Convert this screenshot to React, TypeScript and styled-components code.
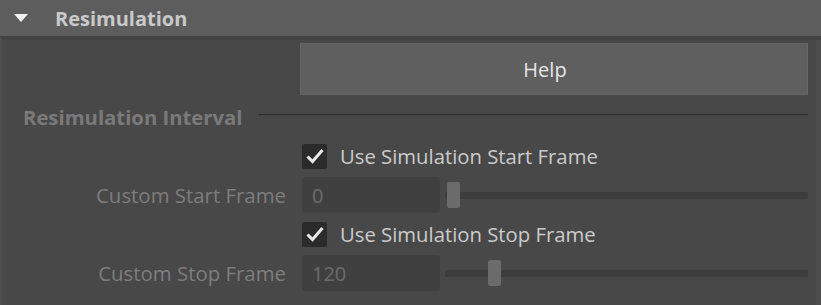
import React from 'react';
import styled, {createGlobalStyle} from 'styled-components';

const GlobalStyle = createGlobalStyle`
  html, body {
    margin: 0;
    padding: 0;
    background-color: #484848;
  }
  * {
    box-sizing: border-box;
  }
`;

const Page = styled.div`
  width: 821px;
  height: 305px;
  overflow: hidden;
  background-color: #484848;
  font-family: "Open Sans", "Noto Sans", sans-serif;
  display: flex;
  flex-direction: column;
`;

const Header = styled.div`
  height: 36px;
  flex-shrink: 0;
  display: flex;
  align-items: center;
  background-color: #5d5d5d;
  padding-left: 14px;
  color: #c9c9c9;
  font-size: 20px;
  font-weight: 700;

  > svg {
    margin-right: 27px;
  }
`;

const Body = styled.div`
  flex: 1;
  display: flex;
  border-left: 2px solid #4f4f4f;
  border-top: 4px solid #444;
`;

const Content = styled.div`
  flex: 1;
  padding: 3px 8px 0 0;
  display: flex;
  flex-direction: column;
`;

const ScrollStrip = styled.div`
  width: 5px;
  background-color: #4d4d4d;
`;

const Row = styled.div<{ $height: number }>`
  display: grid;
  grid-template-columns: 284px 1fr;
  column-gap: 14px;
  align-items: center;
  height: ${p => p.$height}px;
`;

const FieldLabel = styled.div`
  text-align: right;
  color: #7d7d7d;
  font-size: 20.4px;
  white-space: nowrap;
`;

const Button = styled.button`
  height: 52px;
  background-color: #5f5f5f;
  border: 1px solid #666;
  color: #e6e6e6;
  font-family: inherit;
  font-size: 20px;
  padding: 0 18px 0 0;
  cursor: pointer;
`;

const SectionTitle = styled.div`
  display: flex;
  align-items: center;
  gap: 16px;
  height: 42px;
  padding-left: 21px;
  padding-top: 2px;
  color: #7a7a7a;
  font-size: 20.3px;
  font-weight: 700;
  white-space: nowrap;
`;

const Rule = styled.div`
  flex: 1;
  height: 2px;
  margin-bottom: 4px;
  border-top: 1px solid #2c2c2c;
  border-bottom: 1px solid #444;
`;

const CheckLabel = styled.label`
  display: flex;
  align-items: center;
  gap: 13px;
  color: #cbcbcb;
  font-size: 20.3px;
  white-space: nowrap;
  margin-left: 2px;
`;

const CheckBox = styled.span`
  width: 25px;
  height: 25px;
  border-radius: 2px;
  background-color: #2b2b2b;
  display: flex;
  align-items: center;
  justify-content: center;
`;

const Controls = styled.div`
  display: flex;
  align-items: center;
  gap: 5px;
  margin-left: 2px;
`;

const NumberInput = styled.div`
  width: 138px;
  height: 36px;
  border-radius: 3px;
  background-color: #404040;
  color: #6c6c6c;
  font-size: 20px;
  display: flex;
  align-items: center;
  padding-left: 10px;
`;

const Track = styled.div`
  flex: 1;
  height: 7px;
  border-radius: 2px;
  background-color: #3d3d3d;
  position: relative;
`;

const Thumb = styled.div`
  position: absolute;
  top: -10px;
  width: 13px;
  height: 26px;
  border-radius: 2px;
  background-color: #6b6b6b;
`;

function Check() {
    return (
        <CheckBox>
            <svg width="20" height="18" viewBox="0 0 20 18">
                <polyline points="2.5,9.5 7.5,14.5 17.5,3" fill="none" stroke="#e8e8e8" strokeWidth="3"/>
            </svg>
        </CheckBox>
    );
}

type Field = { label: string; value: number; thumb: number };

const fields: { check: string; field: Field }[] = [
    {check: 'Use Simulation Start Frame', field: {label: 'Custom Start Frame', value: 0, thumb: 2}},
    {check: 'Use Simulation Stop Frame', field: {label: 'Custom Stop Frame', value: 120, thumb: 43}},
];

function App() {
    return (
        <Page>
            <GlobalStyle/>
            <Header>
                <svg width="14" height="9" viewBox="0 0 14 9">
                    <polygon points="0,0 14,0 7,8" fill="#f0f0f0"/>
                </svg>
                Resimulation
            </Header>
            <Body>
                <Content>
                    <Row $height={52}>
                        <div/>
                        <Button>Help</Button>
                    </Row>
                    <SectionTitle>
                        Resimulation Interval
                        <Rule/>
                    </SectionTitle>
                    {fields.map(f =>
                        <React.Fragment key={f.check}>
                            <Row $height={38}>
                                <div/>
                                <CheckLabel>
                                    <Check/>
                                    {f.check}
                                </CheckLabel>
                            </Row>
                            <Row $height={40}>
                                <FieldLabel>{f.field.label}</FieldLabel>
                                <Controls>
                                    <NumberInput>{f.field.value}</NumberInput>
                                    <Track>
                                        <Thumb style={{left: f.field.thumb}}/>
                                    </Track>
                                </Controls>
                            </Row>
                        </React.Fragment>
                    )}
                </Content>
                <ScrollStrip/>
            </Body>
        </Page>
    );
}

export default App;
